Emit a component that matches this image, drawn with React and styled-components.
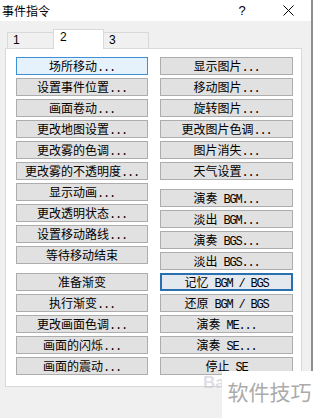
import React from "react";
import styled, { createGlobalStyle, css } from "styled-components";

const GlobalStyle = createGlobalStyle`
    html, body {
        margin: 0;
        padding: 0;
        background: #fff;
    }
    body {
        font-family: "Noto Sans CJK SC", "Noto Sans", sans-serif;
        color: #000;
    }
`

const Page = styled.div`
    position: relative;
    width: 317px;
    height: 418px;
    overflow: hidden;
`

const Dialog = styled.div`
    width: 311px;
    height: 418px;
    background: #f0f0f0;
    border-right: 2px solid #8e8e8e;
    display: flex;
    flex-direction: column;
`

const TitleBar = styled.div`
    height: 21px;
    background: #fff;
    display: flex;
    align-items: center;
    padding-left: 2px;
`

const Title = styled.span`
    flex: 1;
    font-size: 12px;
    line-height: 21px;
`

const Caption = styled.div`
    width: 46px;
    height: 21px;
    display: flex;
    align-items: center;
    justify-content: center;
    font: 13px "Liberation Sans", sans-serif;
`

const TabControl = styled.div`
    margin: 8px 0 0 5px;
    width: 297px;
`

const TabStrip = styled.div`
    display: flex;
    align-items: flex-end;
    height: 19px;
    padding-left: 2px;
`

const Tab = styled.div`
    position: relative;
    box-sizing: border-box;
    width: ${p => p.$width}px;
    height: 16px;
    margin-left: -1px;
    padding-left: 5px;
    border: 1px solid #d9d9d9;
    border-bottom: none;
    background: #f0f0f0;
    font: 12px/15px "Liberation Sans", sans-serif;
    &:first-child {
        margin-left: 0;
    }
    ${p => p.$active && css`
        z-index: 1;
        height: 20px;
        margin-bottom: -1px;
        padding-left: 6px;
        background: #fff;
        line-height: 15px;
    `}
`

const Panel = styled.div`
    box-sizing: border-box;
    height: 339px;
    padding: 8px 8px 11px 10px;
    border: 1px solid #d9d9d9;
    background: #fff;
    display: flex;
    gap: 12px;
`

const Column = styled.div`
    width: ${p => p.$width}px;
    display: flex;
    flex-direction: column;
    gap: 9px;
`

const Group = styled.div`
    display: flex;
    flex-direction: column;
    gap: 3px;
`

const CmdButton = styled.button`
    box-sizing: border-box;
    height: 18px;
    width: 100%;
    margin: 0;
    padding: 0;
    border: 1px solid #adadad;
    background: #e1e1e1;
    color: #000;
    font-family: "Noto Sans CJK SC", sans-serif;
    font-size: 12px;
    line-height: 16px;
    text-align: center;
    white-space: nowrap;
    overflow: visible;
    ${p => p.$state === 'hover' && css`
        border-color: #3d8fd6;
        background: #e5f1fb;
    `}
    ${p => p.$state === 'focus' && css`
        border: 2px solid #2a6fae;
        background: #e4e9ef;
        line-height: 14px;
    `}
`

const Half = styled.span`
    font-family: "Liberation Mono", monospace;
    font-size: 12px;
    letter-spacing: -1.2px;
`

const Watermark = styled.div`
    position: absolute;
    left: 222px;
    top: 371px;
    width: 95px;
    height: 47px;
    box-sizing: border-box;
    padding-top: 6px;
    background: #fff;
    text-align: center;
    font-size: 21px;
    line-height: 28px;
    color: #ababab;
`

const BaiduMark = styled.div`
    position: absolute;
    left: 203px;
    top: 373px;
    font: bold 17px/20px "Liberation Sans", sans-serif;
    color: rgba(200, 200, 210, 0.6);
`

const leftColumn = [
    [
        { label: '场所移动...', state: 'hover' },
        { label: '设置事件位置...' },
        { label: '画面卷动...' },
        { label: '更改地图设置...' },
        { label: '更改雾的色调...' },
        { label: '更改雾的不透明度...' },
        { label: '显示动画...' },
        { label: '更改透明状态...' },
        { label: '设置移动路线...' },
        { label: '等待移动结束' },
    ],
    [
        { label: '准备渐变' },
        { label: '执行渐变...' },
        { label: '更改画面色调...' },
        { label: '画面的闪烁...' },
        { label: '画面的震动...' },
    ],
]

const rightColumn = [
    [
        { label: '显示图片...' },
        { label: '移动图片...' },
        { label: '旋转图片...' },
        { label: '更改图片色调...' },
        { label: '图片消失...' },
        { label: '天气设置...' },
    ],
    [
        { label: '演奏 BGM...' },
        { label: '淡出 BGM...' },
        { label: '演奏 BGS...' },
        { label: '淡出 BGS...' },
        { label: '记忆 BGM / BGS', state: 'focus' },
        { label: '还原 BGM / BGS' },
        { label: '演奏 ME...' },
        { label: '演奏 SE...' },
        { label: '停止 SE' },
    ],
]

// latin parts are drawn half width, like the old bitmap font
const renderLabel = (text) =>
    text.split(/([\x20-\x7e]+)/).filter(Boolean).map((part, i) =>
        /^[\x20-\x7e]+$/.test(part) ? <Half key={i}>{part}</Half> : part
    )

const CloseIcon = () => (
    <svg width="11" height="11" viewBox="0 0 11 11">
        <path d="M0.5 0.5 L10.5 10.5 M10.5 0.5 L0.5 10.5" stroke="#000" strokeWidth="1" fill="none" />
    </svg>
)

const CommandColumn = ({ groups, width }) => (
    <Column $width={width}>
        {groups.map((group, g) => (
            <Group key={g}>
                {group.map(item => (
                    <CmdButton key={item.label} $state={item.state}>
                        {renderLabel(item.label)}
                    </CmdButton>
                ))}
            </Group>
        ))}
    </Column>
)

const App = () => {
    return (
        <Page>
            <GlobalStyle />
            <Dialog>
                <TitleBar>
                    <Title>事件指令</Title>
                    <Caption>?</Caption>
                    <Caption><CloseIcon /></Caption>
                </TitleBar>
                <TabControl>
                    <TabStrip>
                        <Tab $width={47}>1</Tab>
                        <Tab $width={51} $active>2</Tab>
                        <Tab $width={46}>3</Tab>
                    </TabStrip>
                    <Panel>
                        <CommandColumn groups={leftColumn} width={132} />
                        <CommandColumn groups={rightColumn} width={133} />
                    </Panel>
                </TabControl>
            </Dialog>
            <BaiduMark>Ba</BaiduMark>
            <Watermark>软件技巧</Watermark>
        </Page>
    )
}

export default App;
